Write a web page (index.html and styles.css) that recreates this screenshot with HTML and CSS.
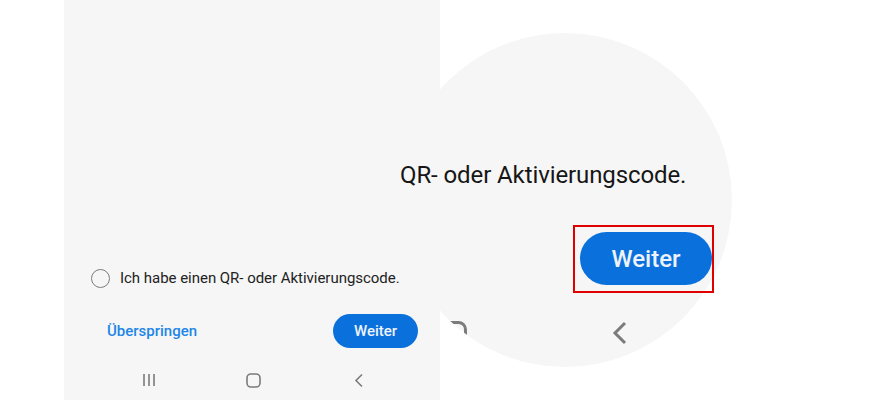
FILE: index.html
```html
<!DOCTYPE html>
<html lang="de">
<head>
<meta charset="utf-8">
<link rel="stylesheet" href="styles.css">
</head>
<body>
<div class="stage">
  <div class="phone">
    <label class="option"><span class="radio"></span><span class="option-text">Ich habe einen QR- oder Aktivierungscode.</span></label>
    <div class="actions">
      <a class="skip">Überspringen</a>
      <button class="btn">Weiter</button>
    </div>
    <div class="nav">
      <svg class="nav-icon" width="14" height="14" viewBox="0 0 14 14"><path d="M2 1v12M7 1v12M12 1v12" fill="none" stroke="#7b7b7b" stroke-width="1.6"/></svg>
      <svg class="nav-icon" width="15" height="15" viewBox="0 0 15 15"><rect x="1" y="1" width="13" height="13" rx="4" fill="none" stroke="#7b7b7b" stroke-width="1.6"/></svg>
      <svg class="nav-icon" width="10" height="15" viewBox="0 0 10 15"><path d="M8 1.5 2 7.5l6 6" fill="none" stroke="#7b7b7b" stroke-width="1.6"/></svg>
    </div>
  </div>

  <div class="lens">
    <p class="lens-text">QR- oder Aktivierungscode.</p>
    <div class="lens-action"><button class="btn btn-big">Weiter</button></div>
    <div class="lens-nav">
      <svg class="lens-home" width="24" height="24" viewBox="0 0 24 24"><rect x="1.5" y="1.5" width="21" height="21" rx="7" fill="none" stroke="#7b7b7b" stroke-width="3"/></svg>
      <svg class="lens-back" width="16" height="24" viewBox="0 0 16 24"><path d="M13 2 3 12l10 10" fill="none" stroke="#7b7b7b" stroke-width="3"/></svg>
    </div>
  </div>
  <div class="highlight"></div>
</div>
</body>
</html>
```

FILE: styles.css
```css
* { box-sizing: border-box; }
html, body { margin: 0; padding: 0; background: #ffffff; }
body { font-family: Roboto, "Noto Sans", sans-serif; }

.stage {
  position: relative;
  width: 879px;
  height: 400px;
  overflow: hidden;
}

.phone {
  margin-left: 64px;
  width: 376px;
  height: 400px;
  background: #f6f6f6;
  display: flex;
  flex-direction: column;
  justify-content: flex-end;
}

.option {
  display: flex;
  align-items: center;
  gap: 10px;
  padding-left: 27px;
  height: 20px;
  margin-bottom: 26px;
}
.radio {
  width: 19px;
  height: 19px;
  border: 1.6px solid #7c7c7c;
  border-radius: 50%;
  flex: none;
}
.option-text {
  font-size: 15px;
  color: #222222;
  letter-spacing: -0.03px;
}

.actions {
  display: flex;
  align-items: center;
  justify-content: space-between;
  padding: 0 22px 0 43px;
  height: 34px;
}
.skip {
  font-size: 15px;
  font-weight: 500;
  color: #1e86e6;
}
.btn {
  border: 0;
  background: #0a71dc;
  color: #eef3fb;
  font-family: inherit;
  font-size: 15px;
  font-weight: 500;
  width: 85px;
  height: 34px;
  border-radius: 17px;
  padding: 0;
}

.nav {
  display: grid;
  grid-template-columns: repeat(3, 105px);
  justify-items: center;
  align-items: center;
  padding-left: 32px;
  height: 40px;
  margin-top: 12px;
}
.nav-icon { display: block; }

.lens {
  position: absolute;
  left: 398px;
  top: 33px;
  width: 334px;
  height: 334px;
  border-radius: 50%;
  overflow: hidden;
  background: #f6f6f6;
  display: flex;
  flex-direction: column;
  padding-top: 128px;
}
.lens-text {
  margin: 0;
  padding-left: 2px;
  font-size: 24px;
  line-height: 28px;
  color: #161616;
  white-space: nowrap;
  letter-spacing: -0.1px;
}
.lens-action {
  margin-top: 43px;
  padding-left: 182px;
}
.btn-big {
  width: 132px;
  height: 53px;
  border-radius: 27px;
  font-size: 24px;
  font-weight: 500;
}
.lens-nav {
  margin-top: 36px;
  display: flex;
  align-items: flex-start;
  padding-left: 45px;
}
.lens-home { display: block; }
.lens-back { display: block; margin-left: 145px; }

.highlight {
  position: absolute;
  left: 573px;
  top: 225px;
  width: 141px;
  height: 68px;
  border: 2px solid #e00000;
}
```
